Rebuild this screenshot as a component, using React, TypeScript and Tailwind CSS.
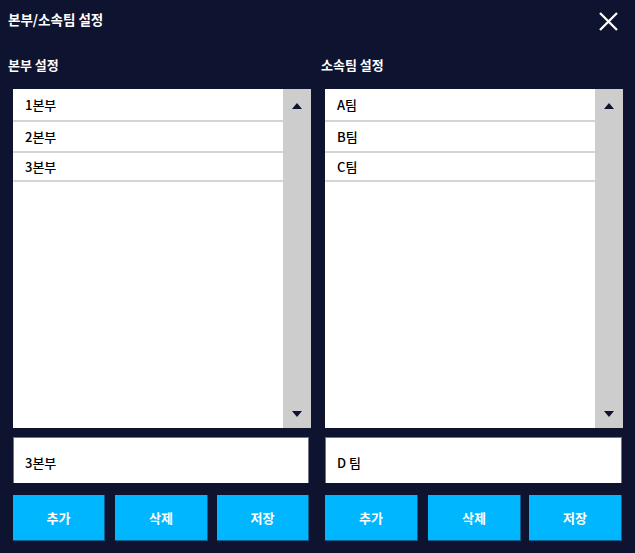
import React from "react";

type ColProps = {
  label: string;
  labelOffset: string;
  items: { text: string; h: string }[];
  inputValue: string;
  inputW: string;
  btnWidths: string[];
  btnGaps: string[];
};

const rowH = ["h-[33px]", "h-[31px]", "h-[29px]"];

function Column({ label, labelOffset, items, inputValue, inputW, btnWidths, btnGaps }: ColProps) {
  const btns = ["추가", "삭제", "저장"];
  return (
    <div className="flex flex-col">
      <div className="mt-[26px] h-[20px] leading-[20px] text-[13px] font-bold text-white">{label}</div>
      <div className={`${labelOffset} mt-[14px] flex h-[339px] w-[298px] bg-white`}>
        <div className="flex-1 flex flex-col">
          {items.map((it, i) => (
            <div
              key={i}
              className={`${it.h} flex items-center border-b-2 border-[#d4d4d6] pl-[12px] text-[13px] font-medium text-black`}
            >
              {it.text}
            </div>
          ))}
        </div>
        <div className="flex w-[28px] flex-col items-center justify-between bg-[#cdcdcd] pt-[14px] pb-[11px]">
          <svg width="10" height="6" viewBox="0 0 10 6">
            <polygon points="0,6 10,6 5,0" fill="#0e1330" />
          </svg>
          <svg width="10" height="6" viewBox="0 0 10 6">
            <polygon points="0,0 10,0 5,6" fill="#0e1330" />
          </svg>
        </div>
      </div>
      <div
        className={`${labelOffset} ${inputW} mt-[9px] flex h-[46px] items-center border border-b-0 border-[#70748a] bg-white pl-[11px] pt-[4px] text-[13px] font-medium text-black`}
      >
        {inputValue}
      </div>
      <div className={`${labelOffset} mt-[12px] flex`}>
        {btns.map((b, i) => (
          <div
            key={b}
            className={`${btnWidths[i]} ${btnGaps[i]} flex h-[46px] items-center justify-center border-r border-b border-[#0b5f8f] bg-[#00b6fe] text-[13px] font-bold text-white`}
          >
            {b}
          </div>
        ))}
      </div>
    </div>
  );
}

export default function App() {
  return (
    <div className="h-[553px] w-[635px] overflow-hidden bg-[#0e1330] font-['Noto_Sans_CJK_KR','Noto_Sans',sans-serif]">
      <div className="flex h-[29px] items-start justify-between pl-[8px] pr-[17px] pt-[9px]">
        <div className="h-[20px] text-[13.5px] font-bold leading-[20px] text-white">본부/소속팀 설정</div>
        <svg className="mt-[3px] shrink-0" width="19" height="19" viewBox="0 0 19 19">
          <line x1="1" y1="1" x2="18" y2="18" stroke="white" strokeWidth="2.3" />
          <line x1="18" y1="1" x2="1" y2="18" stroke="white" strokeWidth="2.3" />
        </svg>
      </div>
      <div className="flex pl-[8px]">
        <div className="w-[313px]">
          <Column
            label="본부 설정"
            labelOffset="ml-[5px]"
            items={[
              { text: "1본부", h: rowH[0] },
              { text: "2본부", h: rowH[1] },
              { text: "3본부", h: rowH[2] },
            ]}
            inputValue="3본부"
            inputW="w-[296px]"
            btnWidths={["w-[92px]", "w-[93px]", "w-[92px]"]}
            btnGaps={["", "ml-[10px]", "ml-[9px]"]}
          />
        </div>
        <div className="w-[314px]">
          <Column
            label="소속팀 설정"
            labelOffset="ml-[4px]"
            items={[
              { text: "A팀", h: rowH[0] },
              { text: "B팀", h: rowH[1] },
              { text: "C팀", h: rowH[2] },
            ]}
            inputValue="D 팀"
            inputW="w-[297px]"
            btnWidths={["w-[93px]", "w-[93px]", "w-[93px]"]}
            btnGaps={["", "ml-[10px]", "ml-[8px]"]}
          />
        </div>
      </div>
    </div>
  );
}
